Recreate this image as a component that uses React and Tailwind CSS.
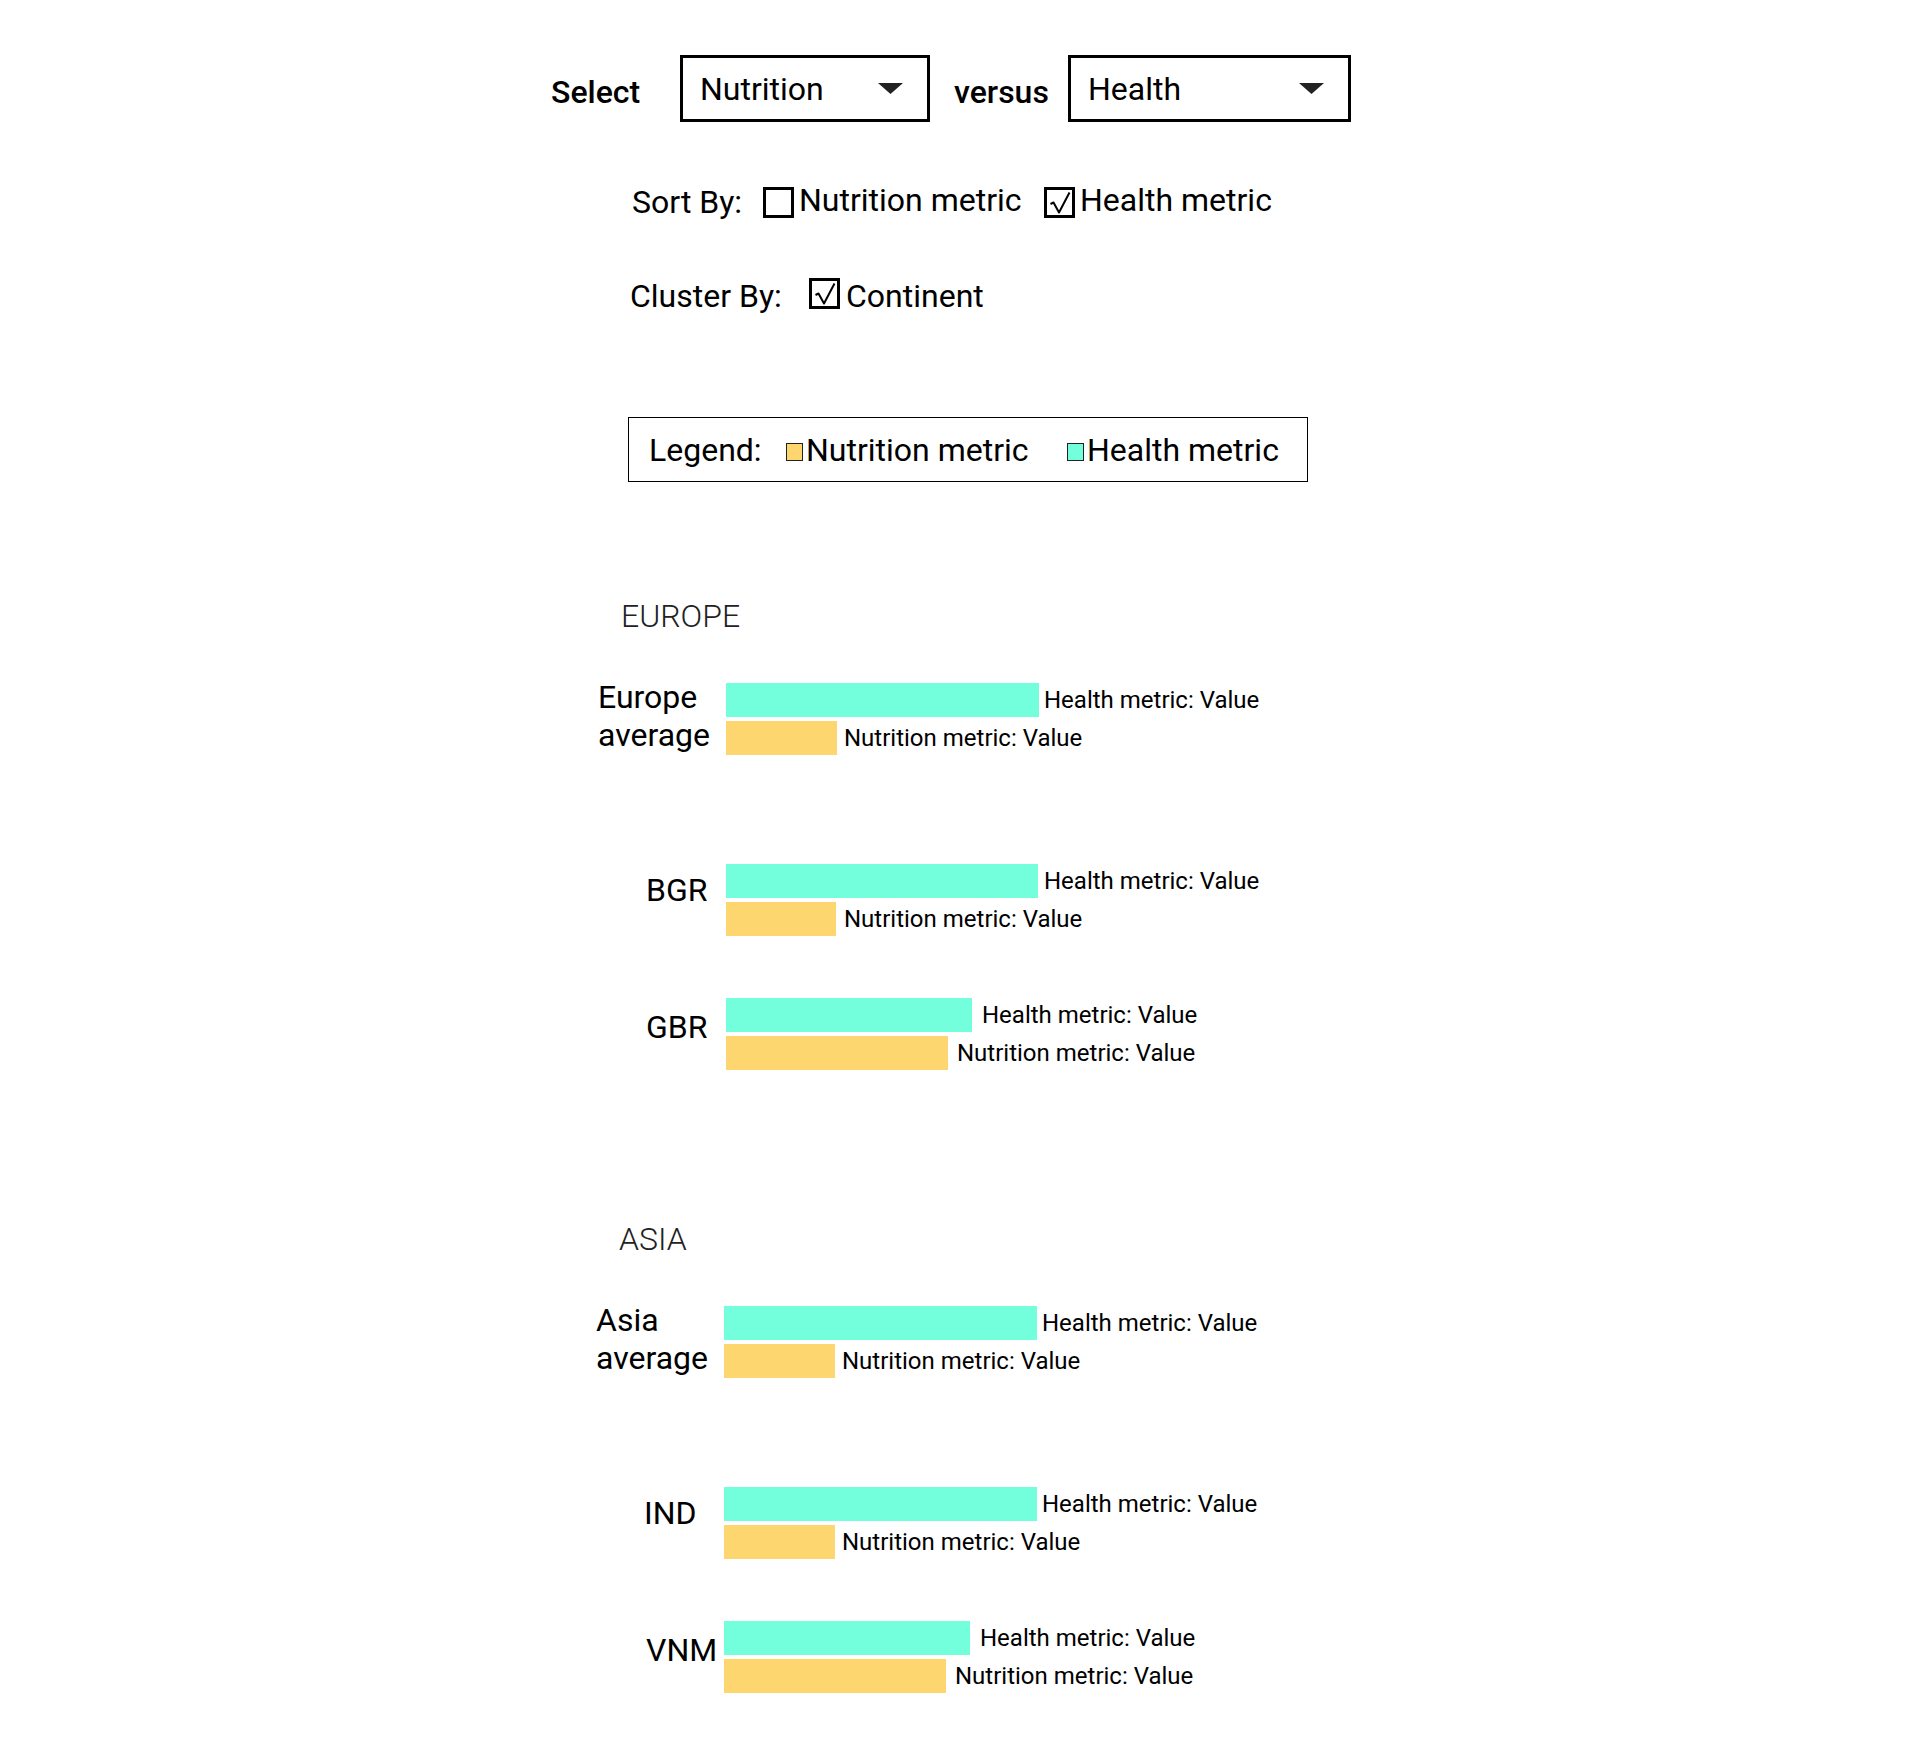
import React from "react";

const sections = [
  {
    name: "EUROPE",
    offset: "ml-[598px]",
    gap: "mt-[115px]",
    rows: [
      {
        label: ["Europe", "average"],
        top: "mt-[43px]",
        labelClass: "",
        health: 313,
        nutrition: 111,
        healthGap: "ml-[5px]",
        nutritionGap: "ml-[7px]",
      },
      {
        label: ["BGR"],
        top: "mt-[109px]",
        labelClass: "pl-[48px] mt-[7px]",
        health: 312,
        nutrition: 110,
        healthGap: "ml-[6px]",
        nutritionGap: "ml-[8px]",
      },
      {
        label: ["GBR"],
        top: "mt-[62px]",
        labelClass: "pl-[48px] mt-[10px]",
        health: 246,
        nutrition: 222,
        healthGap: "ml-[10px]",
        nutritionGap: "ml-[9px]",
      },
    ],
  },
  {
    name: "ASIA",
    offset: "ml-[596px]",
    gap: "mt-[150px]",
    rows: [
      {
        label: ["Asia", "average"],
        top: "mt-[43px]",
        labelClass: "",
        health: 313,
        nutrition: 111,
        healthGap: "ml-[5px]",
        nutritionGap: "ml-[7px]",
      },
      {
        label: ["IND"],
        top: "mt-[109px]",
        labelClass: "pl-[48px] mt-[7px]",
        health: 313,
        nutrition: 111,
        healthGap: "ml-[5px]",
        nutritionGap: "ml-[7px]",
      },
      {
        label: ["VNM"],
        top: "mt-[62px]",
        labelClass: "pl-[50px] mt-[10px]",
        health: 246,
        nutrition: 222,
        healthGap: "ml-[10px]",
        nutritionGap: "ml-[9px]",
      },
    ],
  },
];

const Caret = () => (
  <svg width="25" height="11" viewBox="0 0 25 11">
    <polygon points="0,0 25,0 12.5,11" fill="#222" />
  </svg>
);

const Dropdown = ({ value, width }) => (
  <div
    className={`flex h-[67px] items-center justify-between border-[3px] border-black pl-[17px] pr-[24px] ${width}`}
  >
    <span className="leading-[38px]">{value}</span>
    <Caret />
  </div>
);

const Checkbox = ({ checked, className = "" }) => (
  <div
    className={`flex h-[31px] w-[31px] shrink-0 items-center justify-center border-[3px] border-black ${className}`}
  >
    {checked && (
      <svg width="25" height="25" viewBox="0 0 25 25">
        <path
          d="M3.5 14 L6.5 12.5 L12 22.5 L22.5 2.5"
          fill="none"
          stroke="#000"
          strokeWidth="2"
          strokeLinejoin="round"
        />
      </svg>
    )}
  </div>
);

const BarRow = ({ row }) => (
  <div className={`flex items-start ${row.top}`}>
    <div
      className={`w-[128px] shrink-0 leading-[38px] ${row.labelClass}`}
    >
      {row.label.map((line) => (
        <div key={line}>{line}</div>
      ))}
    </div>
    <div
      className={`flex flex-col gap-[4px] ${
        row.label.length > 1 ? "mt-[5px]" : ""
      }`}
    >
      <div className="flex h-[34px] items-center">
        <div
          className="h-full bg-[#74ffdc]"
          style={{ width: row.health }}
        />
        <span className={`text-[24px] leading-none ${row.healthGap}`}>
          Health metric: Value
        </span>
      </div>
      <div className="flex h-[34px] items-center">
        <div
          className="h-full bg-[#fed670]"
          style={{ width: row.nutrition }}
        />
        <span className={`text-[24px] leading-none ${row.nutritionGap}`}>
          Nutrition metric: Value
        </span>
      </div>
    </div>
  </div>
);

export default function App() {
  return (
    <div className="min-h-[1756px] w-full bg-white pb-[60px] pt-[55px] font-[Roboto,sans-serif] text-[32px] text-black">
      {/* selectors */}
      <div className="ml-[551px] flex items-start">
        <span className="mt-[18px] w-[129px] font-medium leading-[38px]">
          Select
        </span>
        <Dropdown value="Nutrition" width="w-[250px]" />
        <span className="ml-[24px] mt-[18px] w-[114px] font-medium leading-[38px]">
          versus
        </span>
        <Dropdown value="Health" width="w-[283px]" />
      </div>

      {/* sort by */}
      <div className="ml-[632px] mt-[59px] flex items-start">
        <span className="mt-[2px] w-[131px] leading-[38px]">Sort By:</span>
        <Checkbox className="mt-[6px]" />
        <span className="ml-[5px] w-[245px] leading-[38px]">
          Nutrition metric
        </span>
        <Checkbox checked className="mt-[6px]" />
        <span className="ml-[5px] leading-[38px]">Health metric</span>
      </div>

      {/* cluster by */}
      <div className="ml-[630px] mt-[56px] flex items-start">
        <span className="w-[179px] leading-[38px]">Cluster By:</span>
        <Checkbox checked className="mt-[1px]" />
        <span className="ml-[6px] leading-[38px]">Continent</span>
      </div>

      {/* legend */}
      <div className="ml-[628px] mt-[102px] flex h-[65px] w-[680px] items-center border border-black pl-[20px]">
        <span className="w-[137px] leading-[38px]">Legend:</span>
        <span className="mt-[4px] h-[18px] w-[17px] shrink-0 border border-[#222] bg-[#fed670]" />
        <span className="ml-[3px] w-[261px] leading-[38px]">
          Nutrition metric
        </span>
        <span className="mt-[4px] h-[18px] w-[17px] shrink-0 border border-[#222] bg-[#74ffdc]" />
        <span className="ml-[3px] leading-[38px]">Health metric</span>
      </div>

      {/* clusters */}
      {sections.map((section) => (
        <div key={section.name} className={`${section.offset} ${section.gap}`}>
          <div className="pl-[23px] font-light leading-[38px] text-[#222]">
            {section.name}
          </div>
          {section.rows.map((row) => (
            <BarRow key={row.label.join(" ")} row={row} />
          ))}
        </div>
      ))}
    </div>
  );
}
